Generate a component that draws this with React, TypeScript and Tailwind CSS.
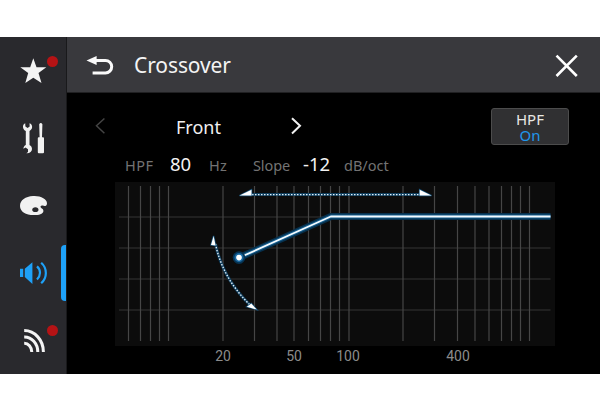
import React from 'react';

const GRID_X = [128.5, 140.5, 150.5, 159.5, 168.5, 223, 254.5, 277, 294, 308.5, 320.5, 330.5, 339.5, 349, 403, 434.5, 457.5, 475, 489, 501.5, 511.5, 520.5, 529.5];
const GRID_Y = [217, 248, 279, 310];

function Dot() {
  return <span className="absolute left-[47px] top-[19px] size-[10.5px] rounded-full bg-[#b51315]" />;
}

function Sidebar() {
  return (
    <nav className="flex w-[66px] shrink-0 flex-col bg-[#29292d]">
      <div className="relative h-[67px]">
        <svg className="block" width="66" height="67" viewBox="0 37 66 67">
          <path d="M33.3 58.2 36.5 67.2H46.3L38.5 73 41.5 83 33.3 77.8 25.3 83 28.2 73 20.3 67.2H30.2Z" fill="#f4f4f4" />
        </svg>
        <Dot />
      </div>
      <svg className="block" width="66" height="67" viewBox="0 104 66 67">
        <path d="M25.2 123.3C23.4 124 22.7 125.7 23.1 127.7 23.4 129.3 24.4 130.3 25.8 131V144.9C24.4 145.6 23.5 146.8 23.4 148.7L25.6 147.6 28 149.2V152L26.4 153.2C29.5 153.5 32 151.7 32 149 32 147 31 145.7 29.5 144.9V131C31.3 130 32.3 128.6 32.1 126.6 32 125 31.2 123.8 29.5 123.2L29.7 126.5 27.6 128 25.4 126.5Z" fill="#f1f1f1" />
        <path d="M39.2 124.2Q40.8 121.6 42.4 124.2L42 137.3H43.1Q44 137.3 44 138.3V152.2Q44 153.3 43 153.3H38.8Q37.8 153.3 37.8 152.2V138.3Q37.8 137.3 38.7 137.3H39.6Z" fill="#f1f1f1" />
      </svg>
      <svg className="block" width="66" height="68" viewBox="0 171 66 68">
        <path fillRule="evenodd" d="M33 196.1C40.5 195.6 47 199 47 203.4 46.8 205.8 45 206.7 42.8 205.6 41 205 39.8 206.6 41 207.8 42 208.8 43.7 209.2 43.4 211.2 43 214.2 38.5 215.2 33.5 215.1 26 215.1 20 211.8 20 206 20 200.2 25.5 196.5 33 196.1ZM35.4 207.3C33.5 207.3 32.2 208.4 32.2 209.8 32.2 211.2 33.5 212.1 35.4 212.1 37.3 212.1 38.5 211.2 38.5 209.8 38.5 208.4 37.3 207.3 35.4 207.3Z" fill="#f1f1f1" />
      </svg>
      <div className="flex h-[67px] items-start justify-between">
        <svg className="block" width="60" height="67" viewBox="0 239 60 67">
          <path d="M20 268.8H23.2V277H20ZM24.8 268.8 32.4 262.2V284L24.8 277Z" fill="#1ea1f8" />
          <path d="M37 266.4C41 270 41 275.5 37 279.5M41.2 262.7C47.4 268.3 47.4 277.5 41.2 283.3" fill="none" stroke="#1ea1f8" strokeWidth="2.2" />
        </svg>
        <span className="mt-[6px] h-[56px] w-[5px] rounded-l-[4px] bg-[#1ea1f8]" />
      </div>
      <div className="relative h-[68px]">
        <svg className="block" width="66" height="68" viewBox="0 306 66 68">
          <path d="M24.2 330.6A19.2 21.3 0 0 1 43.4 352M24.2 336.9A13.3 15 0 0 1 37.8 352M24.2 343.2A7.5 9 0 0 1 31.8 352" fill="none" stroke="#f4f4f4" strokeWidth="3" />
        </svg>
        <Dot />
      </div>
    </nav>
  );
}

function Header() {
  return (
    <header className="flex h-[56px] items-start border-b border-[#202022] bg-[#39393d]">
      <svg className="block shrink-0" width="67" height="55" viewBox="67 37 67 55">
        <path d="M94 60.4H105.4A6.3 6.3 0 0 1 105.4 73H92.6" fill="none" stroke="#fafafa" strokeWidth="3" />
        <path d="M86.5 60.4 96.6 56V64.9Z" fill="#fafafa" />
      </svg>
      <h1 className="w-[419px] pt-[13px] text-[21px] leading-[30px] tracking-[-0.1px] text-[#f4f4f4]">Crossover</h1>
      <svg className="block" width="47" height="55" viewBox="553 37 47 55">
        <path d="M556.5 55.7 576.8 76M576.8 55.7 556.5 76" stroke="#fff" strokeWidth="2.6" />
      </svg>
    </header>
  );
}

function Chart() {
  return (
    <svg className="ml-[48px] block bg-[#0c0c0c]" width="440" height="164" viewBox="115 182 440 164">
      <g stroke="#202020" strokeWidth="2">
        {GRID_Y.map((y) => <path key={y} d={`M119 ${y}H550.5`} />)}
      </g>
      <g stroke="#464646" strokeWidth="1.2">
        {GRID_X.map((x) => <path key={x} d={`M${x} 186V341`} />)}
      </g>
      <g fill="none" strokeLinejoin="round">
        <path d="M239 257.8 330.8 216.5H550.5" stroke="#07304c" strokeWidth="7" />
        <path d="M239 257.8 330.8 216.5H550.5" stroke="#145c8c" strokeWidth="4" />
        <path d="M239 257.8 330.8 216.5H550.5" stroke="#f4fbff" strokeWidth="1.8" />
      </g>
      <circle cx="239" cy="257.6" r="6.3" fill="#073454" />
      <circle cx="239" cy="257.6" r="4.6" fill="#1767a0" />
      <circle cx="239" cy="257.6" r="2.8" fill="#fff" />
      <g fill="none">
        <path d="M251 194.6H420" stroke="#113e5c" strokeWidth="3" />
        <path d="M252 194.6H420" stroke="#e2f2fc" strokeWidth="1.4" strokeDasharray="1.5 1.5" />
        <path d="M215.5 244Q222.5 278 250 305" stroke="#103c5a" strokeWidth="3" />
        <path d="M215.5 244Q222.5 278 250 305" stroke="#e2f2fc" strokeWidth="1.4" strokeDasharray="1.5 1.5" />
      </g>
      <g fill="#fff" stroke="#14517a" strokeWidth="1.4" paintOrder="stroke">
        <path d="M239.5 195.6 251.5 189.7V195.6Z" />
        <path d="M431.5 195.6 419.6 189.7V195.6Z" />
        <path d="M213.6 236 215.6 245.4 211 245Z" />
        <path d="M256.8 309.6 251.3 303.4 246.8 306.8Z" />
      </g>
    </svg>
  );
}

export default function App() {
  return (
    <div className="flex h-[412px] w-[600px] flex-col bg-white py-[37px] pb-[38px] font-['Noto_Sans',sans-serif] whitespace-nowrap">
      <div className="flex h-[337px] bg-black">
        <Sidebar />
        <div className="w-px shrink-0 bg-[#19191b]" />
        <main className="w-[533px] shrink-0">
          <Header />
          <div className="flex h-[61px]">
            <svg className="block shrink-0" width="67" height="61" viewBox="67 93 67 61">
              <path d="M104.4 118.5 96.5 125.8 104.4 133.2" fill="none" stroke="#444" strokeWidth="1.5" />
            </svg>
            <div className="w-[129px] pt-[21px] text-center text-[18px] leading-[26px] text-[#f0f0f0]">Front</div>
            <svg className="block shrink-0" width="228" height="61" viewBox="263 93 228 61">
              <path d="M292 118.2 300 125.8 292 133.4" fill="none" stroke="#f2f2f2" strokeWidth="2" />
            </svg>
            <button className="mt-[15px] flex h-[37px] w-[78px] flex-col items-center justify-center rounded-[3px] border border-[#4c4c4c] bg-[#303032] text-[15px] leading-[16px] text-[#e8e8e4]">
              <span>HPF</span>
              <span className="text-[#2196ea]">On</span>
            </button>
          </div>
          <div className="flex h-[28px] items-baseline pl-[58px] leading-[20px] text-[14.5px] text-[#737373]">
            <span className="w-[45px] tracking-[0.5px]">HPF</span>
            <span className="w-[39px] text-[18.5px] text-[#f2f2f2]">80</span>
            <span className="w-[44px] tracking-[0.3px]">Hz</span>
            <span className="w-[50px] tracking-[-0.1px]">Slope</span>
            <span className="w-[41px] text-[18.5px] text-[#f2f2f2]">-12</span>
            <span>dB/oct</span>
          </div>
          <Chart />
          <div className="flex pt-px font-['Roboto',sans-serif] text-[14px] leading-[18px] text-[#8b8b8b]">
            <span className="ml-[136px] w-[40px] text-center">20</span>
            <span className="ml-[31px] w-[40px] text-center">50</span>
            <span className="ml-[14px] w-[40px] text-center">100</span>
            <span className="ml-[70px] w-[40px] text-center">400</span>
          </div>
        </main>
      </div>
    </div>
  );
}
